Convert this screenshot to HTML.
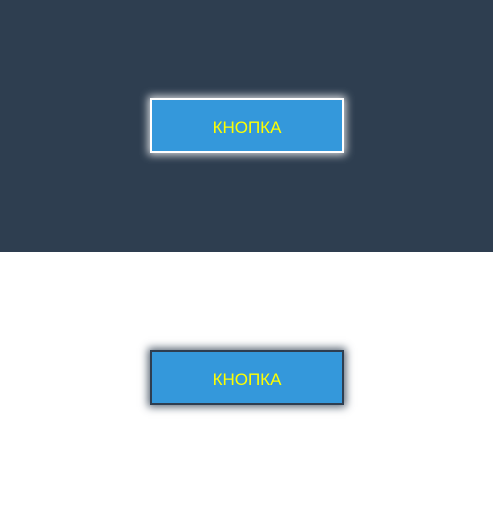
<!DOCTYPE html>
<html><head><style>
body{margin:0;width:493px;height:505px;overflow:hidden;font-family:"Liberation Sans","DejaVu Sans",sans-serif}
.top{position:absolute;left:0;top:0;width:493px;height:252px;background:#2e3e50}
.btn{position:absolute;left:150px;width:190px;height:51px;background:#3498db;color:#ffff00;font-size:17px;line-height:56px;text-align:center;border:2px solid #fff;box-shadow:0 0 8px 2px rgba(255,255,255,.8)}
.b2{border-color:#2e3e50;box-shadow:0 0 8px 2px rgba(46,62,80,.8)}
</style></head><body>
<div class="top"></div>
<div class="btn" style="top:98px">КНОПКА</div>
<div class="btn b2" style="top:350px">КНОПКА</div>
</body></html>
